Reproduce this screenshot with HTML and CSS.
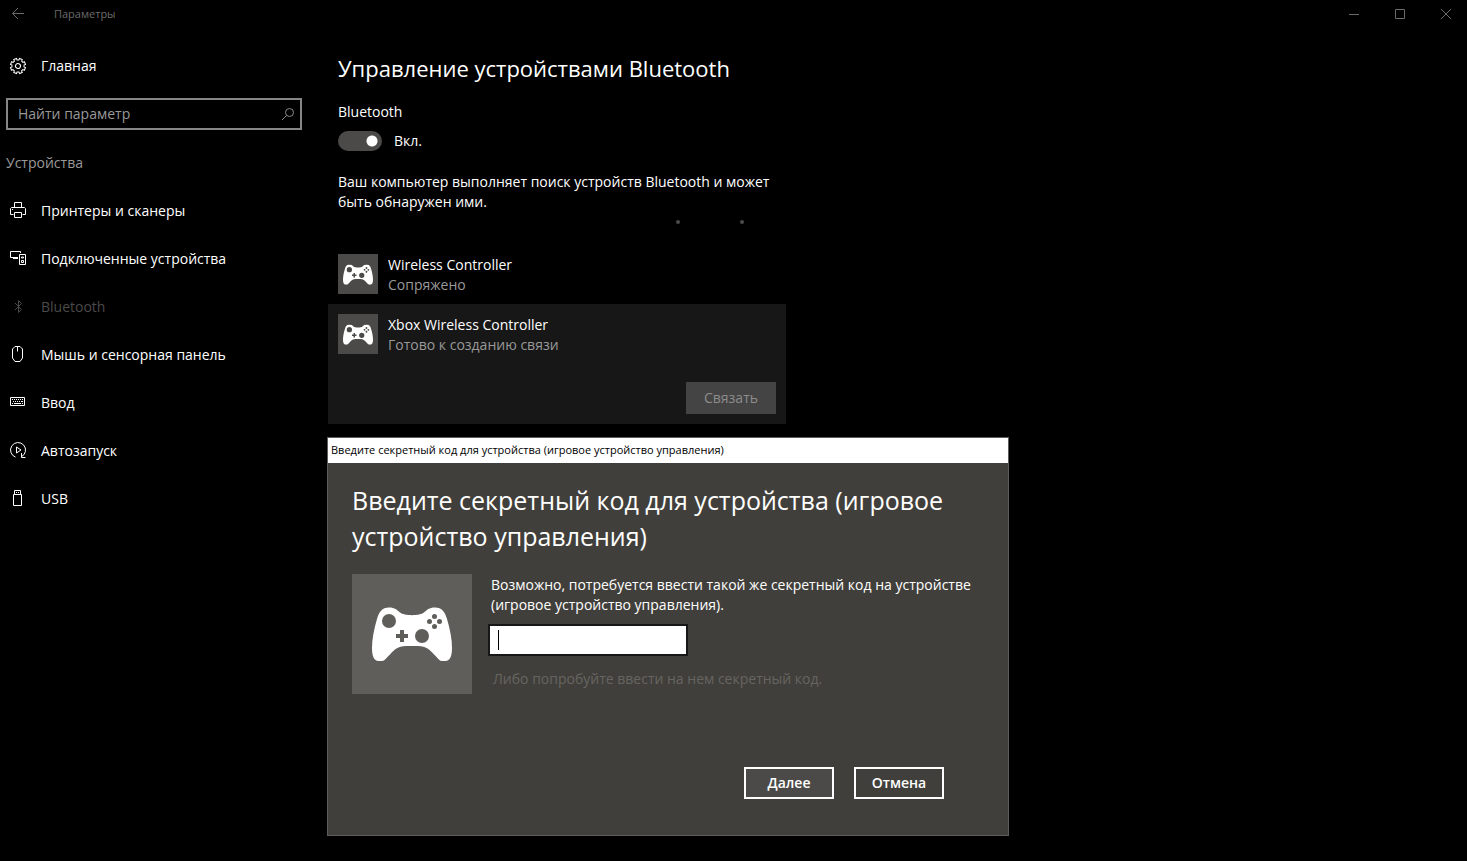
FILE: index.html
```html
<!DOCTYPE html>
<html lang="ru">
<head>
<meta charset="utf-8">
<title>Параметры</title>
<link rel="stylesheet" href="styles.css">
</head>
<body>
<svg class="defs" aria-hidden="true">
  <symbol id="pad" viewBox="0 0 80 54">
    <path fill-rule="evenodd" fill="currentColor" d="M17 0.500C23 0.500 25 3 28 5.500C32 9 48 9 52 5.500C55 3 57 0.500 63 0.500C70 0.500 73 5 75 12C78 22 80 32 80 41C80 49 78 54 73.500 54H70C67 54 66 51 62 47.500C58 43 54 39 46 39H34C26 39 22 43 18 47.500C14 51 13 54 10 54H6.500C2 54 0 49 0 41C0 32 2 22 5 12C7 5 10 0.500 17 0.500ZM17 7A7 7 0 1 0 17 21A7 7 0 1 0 17 7ZM50 22A7 7 0 1 0 50 36A7 7 0 1 0 50 22ZM28 23V27H24V31H28V35H32V31H36V27H32V23ZM62.500 7A2.500 2.500 0 1 0 62.500 12A2.500 2.500 0 1 0 62.500 7ZM62.500 17A2.500 2.500 0 1 0 62.500 22A2.500 2.500 0 1 0 62.500 17ZM57.500 12A2.500 2.500 0 1 0 57.500 17A2.500 2.500 0 1 0 57.500 12ZM67.500 12A2.500 2.500 0 1 0 67.500 17A2.500 2.500 0 1 0 67.500 12Z"/>
  </symbol>
</svg>

<header class="titlebar">
  <button class="back" aria-label="Назад"><svg class="icon" viewBox="0 0 18 18"><path d="M15 8.500H3.500M9 3L3.500 8.500L9 14"/></svg></button>
  <span class="app-name">Параметры</span>
  <div class="window-controls">
    <button aria-label="Свернуть"><svg class="glyph" viewBox="0 0 12 12"><path d="M1 6.500H11"/></svg></button>
    <button aria-label="Развернуть"><svg class="glyph" viewBox="0 0 12 12"><path d="M1.500 1.500H10.500V10.500H1.500Z"/></svg></button>
    <button aria-label="Закрыть"><svg class="glyph" viewBox="0 0 12 12"><path d="M1 1L11 11M11 1L1 11"/></svg></button>
  </div>
</header>

<div class="layout">
  <aside class="sidebar">
    <a class="nav-item" href="#home">
      <svg class="icon" viewBox="0 0 18 18"><g transform="translate(9 9) rotate(22.500)"><path d="M7.500-1.500V1.500L5.900 1.500L5.200 3.200L6.400 4.300L4.300 6.400L3.200 5.200L1.500 5.900V7.500H-1.500V5.900L-3.200 5.200L-4.300 6.400L-6.400 4.300L-5.200 3.200L-5.900 1.500H-7.500V-1.500H-5.900L-5.200-3.200L-6.400-4.300L-4.300-6.400L-3.200-5.200L-1.500-5.900V-7.500H1.500V-5.900L3.200-5.200L4.300-6.400L6.400-4.300L5.200-3.200L5.900-1.500Z"/><circle r="2.500"/></g></svg>
      <span>Главная</span>
    </a>
    <label class="search">
      <input type="text" placeholder="Найти параметр" aria-label="Найти параметр">
      <svg class="search-icon" viewBox="0 0 14 14"><circle cx="8.500" cy="5.500" r="4"/><path d="M5.700 8.300L1 13"/></svg>
    </label>
    <h2 class="section">Устройства</h2>
    <nav class="nav">
      <a class="nav-item" href="#printers"><svg class="icon" viewBox="0 0 18 18"><path d="M5.500 5.500V0.500H12.500V5.500M4.500 12.500H1.500V6.500L2.500 5.500H15.500L16.500 6.500V12.500H13.500M5.500 10.500H12.500V15.500H5.500ZM3 7.500H4"/></svg><span>Принтеры и сканеры</span></a>
      <a class="nav-item" href="#connected"><svg class="icon" viewBox="0 0 18 18"><path d="M9 7.500H1.500V1.500H11.500V3M4 8.500H9M6.500 7V9M10.500 4.500H16.500V14.500H10.500ZM12.500 7V8H14.500V7ZM12.500 10.500H14.500V12.500H12.500Z"/></svg><span>Подключенные устройства</span></a>
      <a class="nav-item current" href="#bluetooth" aria-current="page"><svg class="icon" viewBox="0 0 18 18"><path d="M6 5L12.500 11.500L9.500 14.500V2.500L12.500 5.500L6 12"/></svg><span>Bluetooth</span></a>
      <a class="nav-item" href="#mouse"><svg class="icon" viewBox="0 0 18 18"><path d="M6 0.500H11L13.500 3V12L11 15.500H6L3.500 12V3ZM8.500 0.500V5.500"/></svg><span>Мышь и сенсорная панель</span></a>
      <a class="nav-item" href="#typing"><svg class="icon" viewBox="0 0 18 18"><path d="M1.500 3.500H15.500V11.500H1.500Z"/><path d="M3 5.500H4M5 5.500H6M7 5.500H8M9 5.500H10M11 5.500H12M13 5.500H14M4 7.500H5M6 7.500H7M8 7.500H9M10 7.500H11M12 7.500H14M3 9.500H4M5 9.500H12M13 9.500H14"/></svg><span>Ввод</span></a>
      <a class="nav-item" href="#autoplay"><svg class="icon" viewBox="0 0 18 18"><path d="M6.500 15.100A7.500 7.500 0 1 1 12.500 14.700M12.500 11V15.500H16.500M7.500 5L12 8L7.500 11Z"/></svg><span>Автозапуск</span></a>
      <a class="nav-item" href="#usb"><svg class="icon" viewBox="0 0 18 18"><path d="M4.500 4.500H12.500V15.500H4.500ZM5.500 4.500V0.500H11.500V4.500M7 2.500H8M9 2.500H10"/></svg><span>USB</span></a>
    </nav>
  </aside>

  <main class="content">
    <h1 class="title">Управление устройствами Bluetooth</h1>
    <p class="label" id="bt-label">Bluetooth</p>
    <label class="switch-row">
      <input class="switch" type="checkbox" checked aria-describedby="bt-label">
      <span>Вкл.</span>
    </label>
    <p class="status">Ваш компьютер выполняет поиск устройств Bluetooth и может<br>быть обнаружен ими.</p>
    <div class="progress"><i></i><i></i></div>
    <ul class="devices">
      <li class="device">
        <span class="tile"><svg viewBox="0 0 80 54"><use href="#pad"/></svg></span>
        <p class="device-text"><span>Wireless Controller</span><span class="muted">Сопряжено</span></p>
      </li>
      <li class="device selected">
        <span class="tile"><svg viewBox="0 0 80 54"><use href="#pad"/></svg></span>
        <p class="device-text"><span>Xbox Wireless Controller</span><span class="muted">Готово к созданию связи</span></p>
        <button class="pair" disabled>Связать</button>
      </li>
    </ul>
  </main>
</div>

<section class="dialog" role="dialog" aria-labelledby="dialog-title">
  <header class="dialog-bar">Введите секретный код для устройства (игровое устройство управления)</header>
  <div class="dialog-body">
    <h2 class="dialog-title" id="dialog-title">Введите секретный код для устройства (игровое<br>устройство управления)</h2>
    <div class="dialog-main">
      <span class="tile large"><svg viewBox="0 0 80 54"><use href="#pad"/></svg></span>
      <div class="form">
        <label for="code">Возможно, потребуется ввести такой же секретный код на устройстве<br>(игровое устройство управления).</label>
        <div class="code-field"><input id="code" type="text"><span class="caret"></span></div>
        <p class="hint">Либо попробуйте ввести на нем секретный код.</p>
      </div>
    </div>
    <div class="actions">
      <button class="action primary">Далее</button>
      <button class="action">Отмена</button>
    </div>
  </div>
</section>
</body>
</html>
```
FILE: styles.css
```css
* { box-sizing: border-box; }

body {
  margin: 0;
  min-height: 100vh;
  position: relative;
  background: #000;
  color: #fff;
  font: 14px/20px "Open Sans", "Noto Sans", sans-serif;
}

h1, h2, p, ul { margin: 0; padding: 0; font-weight: 400; }
ul { list-style: none; }
a { color: inherit; text-decoration: none; }
button, input { font: inherit; color: inherit; border-radius: 0; }
button { border: 0; padding: 0; background: none; }
svg { display: block; fill: none; stroke: currentColor; stroke-width: 1; }
.defs { display: none; }
.icon { width: 18px; height: 18px; flex: none; }

.titlebar { display: flex; align-items: center; height: 28px; padding-left: 9px; color: #6b6b6b; }
.back { display: flex; width: 45px; }
.app-name { flex: 1; font-size: 11px; }
.window-controls { display: flex; }
.window-controls button { display: flex; justify-content: center; width: 46px; }
.window-controls button:last-child { width: 44px; padding-left: 2px; }
.glyph { width: 12px; height: 12px; }

.layout { display: grid; grid-template-columns: 328px minmax(0, 1fr); }
.sidebar { padding: 14px 26px 0 6px; }
.nav-item { display: flex; align-items: center; gap: 14px; height: 48px; padding-left: 3px; }
.current { color: #4a4a4a; }

.search {
  display: flex;
  align-items: center;
  height: 32px;
  margin-top: 8px;
  padding: 0 5px 0 10px;
  border: 2px solid #868686;
  color: #8c8c8c;
}
.search input { flex: 1; min-width: 0; padding: 0; border: 0; outline: 0; background: none; }
.search input::placeholder { color: #999; opacity: 1; }
.search-icon { width: 14px; height: 14px; }
.section { margin: 23px 0 14px; color: #999; font-size: 14px; line-height: 20px; }

.content { padding: 24px 0 0; }
.title { padding-left: 10px; font-size: 22px; line-height: 32px; }
.label { margin-top: 18px; padding-left: 10px; }
.switch-row { display: flex; align-items: center; gap: 12px; margin-top: 9px; padding-left: 10px; width: max-content; }
.switch {
  appearance: none;
  width: 44px;
  height: 20px;
  margin: 0;
  border-radius: 10px;
  background: radial-gradient(circle at 34px 10px, #fff 5px, #4c4a48 6px);
}
.status { margin-top: 21px; padding-left: 10px; }
.progress { display: flex; gap: 60px; height: 20px; padding: 8px 0 0 348px; }
.progress i { width: 4px; height: 4px; border-radius: 2px; background: #4c4a48; }

.devices { max-width: 458px; margin-top: 12px; }
.device { display: grid; grid-template-columns: 40px 1fr; grid-template-rows: 40px; gap: 0 10px; padding: 10px; }
.selected { background: #171717; }
.tile { display: flex; align-items: center; justify-content: center; width: 40px; height: 40px; background: #4c4a48; }
.tile svg { width: 30px; height: 21px; stroke: none; }
.device-text { display: flex; flex-direction: column; padding-top: 1px; }
.muted { color: #999; }
.pair { grid-column: 1 / -1; justify-self: end; width: 90px; height: 32px; margin-top: 28px; background: #444; color: #8c8c8c; }

.dialog {
  position: absolute;
  left: 327px;
  top: 437px;
  width: 682px;
  border: 1px solid #5c5c5a;
  background: #413f3b;
}
.dialog-bar { height: 25px; padding-left: 3px; background: #fff; color: #000; font-size: 11px; line-height: 24px; }
.dialog-body { padding: 19px 24px 36px; }
.dialog-title { font-size: 25px; line-height: 36px; }
.dialog-main { display: flex; gap: 16px; margin-top: 20px; }
.large { width: 120px; height: 120px; background: #5f5e5a; }
.large svg { width: 80px; height: 54px; }
.form { flex: 1; padding-top: 1px; }
.form label { display: block; padding-left: 3px; }
.code-field { position: relative; width: 200px; height: 32px; margin-top: 9px; }
.code-field input { display: block; width: 100%; height: 100%; padding: 0 8px; border: 2px solid #171717; outline: 0; background: #fff; color: #000; }
.caret { position: absolute; left: 10px; top: 6px; width: 1px; height: 20px; background: #000; }
.hint { margin-top: 13px; padding-left: 5px; color: #666561; }
.actions { display: flex; justify-content: flex-end; gap: 20px; margin-top: 73px; padding-right: 40px; }
.action { width: 90px; height: 32px; border: 2px solid #fff; font-weight: 600; }
.primary { background: #4c4a48; }
```
